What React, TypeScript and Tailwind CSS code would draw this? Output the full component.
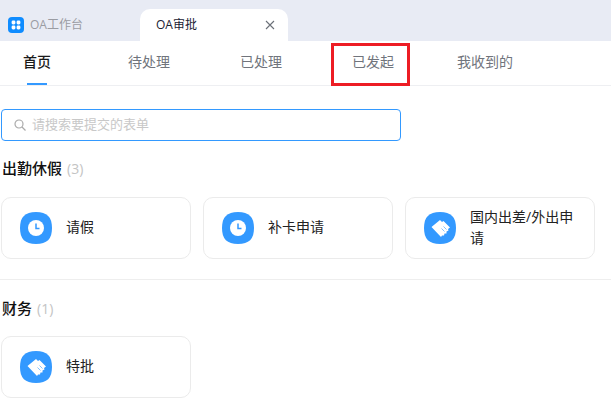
const font = { fontFamily: '"Open Sans", "Noto Sans CJK SC", sans-serif' };

function Squircle() {
  return <path d="M16 0C27 0 32 5 32 16C32 27 27 32 16 32C5 32 0 27 0 16C0 5 5 0 16 0Z" fill="#3399ff" />;
}

function ClockIcon() {
  return (
    <svg width="32" height="32" viewBox="0 0 32 32" className="shrink-0">
      <Squircle />
      <circle cx="16" cy="16" r="8" fill="#fff" />
      <path d="M16 11.5V16.5H19.5" fill="none" stroke="#3399ff" strokeWidth="1.5" />
    </svg>
  );
}

function HandIcon() {
  return (
    <svg width="32" height="32" viewBox="0 0 32 32" className="shrink-0">
      <Squircle />
      <path d="M7.5 15L16 8L18 10L19.5 9L26 15.5L24 17L24.5 18.5L22.5 19.5L22.5 21.5L20.5 21.5L20 23.5L18 23.5L17 25Z" fill="#fff" />
      <path d="M19.5 14.5L22.5 17.5M17.5 16.5L20.5 19.5" stroke="#3399ff" strokeWidth="0.6" />
    </svg>
  );
}

function Card({ icon, label }: { icon: React.ReactNode; label: string }) {
  return (
    <div className="flex h-[62px] w-[190px] items-center gap-[14px] rounded-[10px] border border-[#ebebeb] bg-white pl-[18px] pr-[14px]">
      {icon}
      <span className="pb-[3px] text-[14px] leading-[21px] text-[#222]">{label}</span>
    </div>
  );
}

function Heading({ title, n }: { title: string; n: number }) {
  return (
    <div className="h-5 pl-[2px] text-[15px] font-medium leading-[18px] text-[#111]">
      {title}
      <span className="ml-[5px] text-[14px] font-normal text-[#c4c4c4]">({n})</span>
    </div>
  );
}

function Tab({ label, className, active }: { label: string; className: string; active?: boolean }) {
  return (
    <div className={`relative flex h-[44px] items-center justify-center pb-[3px] text-[14px] ${className} ${active ? "font-medium text-[#1a1a1a]" : "text-[#70747c]"}`}>
      {label}
      {active && <span className="absolute bottom-0 left-1/2 h-[2px] w-5 -translate-x-1/2 bg-[#3399ff]" />}
    </div>
  );
}

export default function App() {
  return (
    <div className="relative h-[402px] w-[611px] overflow-hidden bg-white" style={font}>
      <div className="flex h-[41px] items-end bg-[#e8ebf4]">
        <div className="flex h-[32px] w-[140px] items-center pl-2 text-[12px] text-[#9a9ca3]">
          <svg width="16" height="16" viewBox="0 0 16 16" className="mr-[6px] shrink-0">
            <rect width="16" height="16" rx="4" fill="#0f8cff" />
            <rect x="3.6" y="3.6" width="3.8" height="3.8" rx="1.4" fill="#fff" />
            <rect x="8.6" y="3.6" width="3.8" height="3.8" rx="1.4" fill="#fff" />
            <rect x="3.6" y="8.6" width="3.8" height="3.8" rx="1.4" fill="#fff" />
            <rect x="8.6" y="8.6" width="3.8" height="3.8" rx="1.4" fill="#fff" />
          </svg>
          OA工作台
        </div>
        <div className="flex h-[32px] w-[148px] items-center justify-between rounded-t-[10px] bg-white pl-4 pr-[13px] text-[12px] text-[#1a2233]">
          OA审批
          <svg width="10" height="10" viewBox="0 0 10 10">
            <path d="M1 1L9 9M9 1L1 9" stroke="#6b7078" strokeWidth="1.1" />
          </svg>
        </div>
      </div>

      <div className="flex h-[45px] border-b border-[#eeeff2] pl-[8px]">
        <Tab label="首页" className="w-[58px]" active />
        <Tab label="待处理" className="ml-[54px] w-[58px]" />
        <Tab label="已处理" className="ml-[54px] w-[58px]" />
        <Tab label="已发起" className="ml-[54px] w-[58px]" />
        <Tab label="我收到的" className="ml-[47px] w-[72px]" />
      </div>
      <div className="absolute left-[331px] top-[43px] h-[43px] w-[79px] border-[3px] border-[#ed1c24]" />

      <div className="px-[1px] pt-[23px]">
        <div className="flex h-[32px] w-[400px] items-center rounded-[4px] border border-[#3399ff] pl-[12px] text-[13px] text-[#c8c8c8]">
          <svg width="12" height="12" viewBox="0 0 12 12" className="mr-[6px]">
            <circle cx="5" cy="5" r="4" fill="none" stroke="#aaa" strokeWidth="1.2" />
            <path d="M8 8L11.5 11.5" stroke="#aaa" strokeWidth="1.2" />
          </svg>
          请搜索要提交的表单
        </div>
      </div>

      <div className="mt-[18px]">
        <Heading title="出勤休假" n={3} />
      </div>
      <div className="mt-[18px] flex gap-3 pl-[1px]">
        <Card icon={<ClockIcon />} label="请假" />
        <Card icon={<ClockIcon />} label="补卡申请" />
        <Card icon={<HandIcon />} label="国内出差/外出申请" />
      </div>
      <div className="mt-5 h-px bg-[#eeeeee]" />
      <div className="mt-[19px]">
        <Heading title="财务" n={1} />
      </div>
      <div className="mt-[17px] pl-[1px]">
        <Card icon={<HandIcon />} label="特批" />
      </div>
    </div>
  );
}
